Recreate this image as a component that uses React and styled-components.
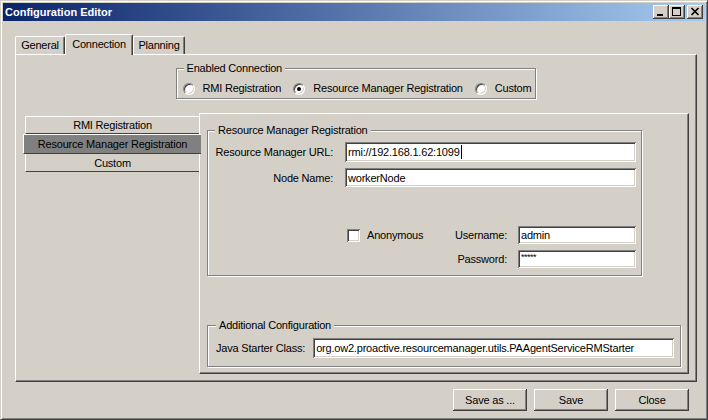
import React from 'react'
import styled, { createGlobalStyle } from 'styled-components'

const GlobalStyle = createGlobalStyle`
  html, body {
    margin: 0;
    padding: 0;
    background: #d4d0c8;
  }
  body {
    font-family: "Liberation Sans", Arial, sans-serif;
    font-size: 11px;
    letter-spacing: -0.2px;
    color: #000;
  }
`

const raised = `
  box-shadow: inset -1px -1px #404040, inset 1px 1px #fff, inset -2px -2px #808080;
`
const sunken = `
  box-shadow: inset 1px 1px #808080, inset -1px -1px #fff, inset 2px 2px #404040, inset -2px -2px #d4d0c8;
`

function App() {
  return (
    <>
      <GlobalStyle />
      <Window>
        <TitleBar>
          <Title>Configuration Editor</Title>
          <Caption>
            <CapButton>
              <svg width="16" height="14" viewBox="0 0 16 14">
                <rect x="4" y="9" width="6" height="2" fill="#000" />
              </svg>
            </CapButton>
            <CapButton>
              <svg width="16" height="14" viewBox="0 0 16 14">
                <rect x="3.5" y="2.5" width="8" height="8" fill="none" stroke="#000" />
                <rect x="3" y="2" width="9" height="2" fill="#000" />
              </svg>
            </CapButton>
            <CapButton $gap>
              <svg width="16" height="14" viewBox="0 0 16 14">
                <path d="M4.5 3l7 7M11.5 3l-7 7" stroke="#000" strokeWidth="1.7" />
              </svg>
            </CapButton>
          </Caption>
        </TitleBar>

        <Body>
          <TabStrip>
            <Tab $w={50}>General</Tab>
            <Tab $w={68} $active>Connection</Tab>
            <Tab $w={52}>Planning</Tab>
          </TabStrip>

          <TabPanel>
            <Group $pad="0 4px 1px 6px" $center>
              <Legend $ml={1}>Enabled Connection</Legend>
              <RadioRow>
                <Choice><Radio /> RMI Registration</Choice>
                <Choice><Radio $on /> Resource Manager Registration</Choice>
                <Choice><Radio /> Custom</Choice>
              </RadioRow>
            </Group>

            <MainRow>
              <SideTabs>
                <SideTab $first>RMI Registration</SideTab>
                <SideTab $active>Resource Manager Registration</SideTab>
                <SideTab>Custom</SideTab>
              </SideTabs>

              <InnerPanel>
                <Group $pad="0 5px 7px 7px" $w={435}>
                  <Legend>Resource Manager Registration</Legend>
                  <FormGrid>
                    <Label>Resource Manager URL:</Label>
                    <Field $h={20}>rmi://192.168.1.62:1099<Caret /></Field>
                    <Label>Node Name:</Label>
                    <Field $h={19}>workerNode</Field>
                  </FormGrid>
                  <Credentials>
                    <Check><Box /> Anonymous</Check>
                    <Label>Username:</Label>
                    <Field $h={18}>admin</Field>
                    <span />
                    <Label>Password:</Label>
                    <Field $h={18}><Stars>*****</Stars></Field>
                  </Credentials>
                </Group>

                <Group $pad="0 6px 8px 8px">
                  <Legend>Additional Configuration</Legend>
                  <StarterRow>
                    <Label>Java Starter Class:</Label>
                    <Field $h={20} $grow>org.ow2.proactive.resourcemanager.utils.PAAgentServiceRMStarter</Field>
                  </StarterRow>
                </Group>
              </InnerPanel>
            </MainRow>
          </TabPanel>

          <ButtonRow>
            <PushButton>Save as ...</PushButton>
            <PushButton>Save</PushButton>
            <PushButton>Close</PushButton>
          </ButtonRow>
        </Body>
      </Window>
    </>
  )
}

export default App

const Window = styled.div`
  width: 708px;
  height: 420px;
  box-sizing: border-box;
  border: 1px solid;
  border-color: #d4d0c8 #404040 #404040 #d4d0c8;
  box-shadow: inset 1px 1px #fff, inset -1px -1px #808080;
  padding: 2px;
  display: flex;
  flex-direction: column;
  background: #d4d0c8;
`

const TitleBar = styled.div`
  height: 18px;
  flex-shrink: 0;
  display: flex;
  align-items: center;
  justify-content: space-between;
  padding: 0 2px 0 2px;
  background: linear-gradient(to right, #0a246a, #a6caf0);
`

const Title = styled.div`
  color: #fff;
  font-weight: bold;
  font-size: 11px;
  letter-spacing: 0;
`

const Caption = styled.div`
  display: flex;
`

const CapButton = styled.div`
  width: 16px;
  height: 14px;
  margin-left: ${p => (p.$gap ? 2 : 0)}px;
  background: #d4d0c8;
  ${raised}
  svg {
    display: block;
  }
`

const Body = styled.div`
  flex: 1;
  display: flex;
  flex-direction: column;
  padding: 13px 8px 6px 12px;
  min-height: 0;
`

const TabStrip = styled.div`
  height: 20px;
  display: flex;
  align-items: flex-end;
  flex-shrink: 0;
`

const Tab = styled.div`
  box-sizing: border-box;
  width: ${p => p.$w}px;
  height: ${p => (p.$active ? 21 : 18)}px;
  margin-bottom: ${p => (p.$active ? -1 : 0)}px;
  padding-top: ${p => (p.$active ? 3 : 2)}px;
  text-align: center;
  background: #d4d0c8;
  border-top: 1px solid #fff;
  border-left: 1px solid #fff;
  border-right: 1px solid #404040;
  border-radius: 2px 2px 0 0;
  box-shadow: inset -1px 0 #808080;
  position: relative;
  z-index: ${p => (p.$active ? 2 : 0)};
  line-height: 13px;
`

const TabPanel = styled.div`
  flex: 1;
  display: flex;
  flex-direction: column;
  border-top: 1px solid #fff;
  border-left: 1px solid #fff;
  border-right: 1px solid #404040;
  border-bottom: 1px solid #404040;
  box-shadow: inset -1px -1px #808080;
  padding: 7px 7px 7px 7px;
  position: relative;
  z-index: 1;
`

const Group = styled.fieldset`
  margin: 0;
  min-width: 0;
  padding: ${p => p.$pad};
  border: 1px solid #808080;
  box-shadow: 1px 1px 0 #fff, inset 1px 1px 0 #fff;
  align-self: ${p => (p.$center ? 'center' : 'stretch')};
  width: ${p => (p.$w ? `${p.$w}px` : 'auto')};
  box-sizing: border-box;
`

const Legend = styled.legend`
  padding: 0 3px;
  margin-left: ${p => p.$ml || 0}px;
  line-height: 13px;
  background: #d4d0c8;
`

const RadioRow = styled.div`
  display: flex;
  gap: 12px;
  padding: 6px 0 1px;
  line-height: 15px;
`

const Choice = styled.label`
  display: flex;
  align-items: center;
  gap: 8px;
  white-space: nowrap;
`

const Radio = styled.span`
  box-sizing: border-box;
  width: 12px;
  height: 12px;
  border-radius: 50%;
  background: #fff;
  border: 1px solid;
  border-color: #808080 #fff #fff #808080;
  box-shadow: inset 1px 1px #404040, inset -1px -1px #d4d0c8;
  display: flex;
  align-items: center;
  justify-content: center;
  &::after {
    content: '';
    width: 4px;
    height: 4px;
    border-radius: 50%;
    background: ${p => (p.$on ? '#000' : 'transparent')};
  }
`

const MainRow = styled.div`
  flex: 1;
  display: flex;
  margin-top: 14px;
  min-height: 0;
`

const SideTabs = styled.div`
  width: 176px;
  flex-shrink: 0;
  margin-top: 3px;
  display: flex;
  flex-direction: column;
  position: relative;
  z-index: 2;
`

const SideTab = styled.div`
  box-sizing: border-box;
  height: ${p => (p.$active ? 20 : 18)}px;
  margin: ${p => (p.$active ? '0 -2px 0 0' : '0 0 0 2px')};
  background: ${p => (p.$active ? '#808080' : '#d4d0c8')};
  border-top: ${p => (p.$first || p.$active ? '1px solid #fff' : '0')};
  border-left: 1px solid #fff;
  border-bottom: 1px solid #404040;
  display: flex;
  align-items: center;
  justify-content: center;
  white-space: nowrap;
`

const InnerPanel = styled.div`
  flex: 1;
  display: flex;
  flex-direction: column;
  justify-content: space-between;
  border-top: 1px solid #fff;
  border-left: 1px solid #fff;
  border-right: 1px solid #404040;
  border-bottom: 1px solid #404040;
  box-shadow: inset -1px -1px #808080;
  padding: 10px 7px 6px 7px;
`

const FormGrid = styled.div`
  display: grid;
  grid-template-columns: 118px 1fr;
  column-gap: 12px;
  row-gap: 6px;
  align-items: center;
  margin-top: 5px;
`

const Label = styled.span`
  justify-self: end;
  white-space: nowrap;
`

const Field = styled.div`
  box-sizing: border-box;
  height: ${p => p.$h}px;
  flex: ${p => (p.$grow ? 1 : 'none')};
  background: #fff;
  ${sunken}
  padding: 0 3px;
  display: flex;
  align-items: center;
  white-space: nowrap;
  overflow: hidden;
`

const Caret = styled.span`
  width: 1px;
  height: 14px;
  background: #000;
  margin-left: 1px;
`

const Stars = styled.span`
  font-size: 9px;
  align-self: flex-start;
  margin-top: 2px;
  letter-spacing: -0.5px;
`

const Credentials = styled.div`
  display: grid;
  grid-template-columns: 1fr auto 118px;
  column-gap: 11px;
  row-gap: 6px;
  align-items: center;
  margin: 39px 0 0 130px;
`

const Check = styled.label`
  display: flex;
  align-items: center;
  gap: 7px;
  margin-left: 2px;
`

const Box = styled.span`
  box-sizing: border-box;
  width: 13px;
  height: 13px;
  background: #fff;
  ${sunken}
`

const StarterRow = styled.div`
  display: flex;
  align-items: center;
  gap: 8px;
  margin-top: 6px;
`

const ButtonRow = styled.div`
  display: flex;
  justify-content: flex-end;
  gap: 7px;
  margin-top: 7px;
  padding-right: 8px;
  flex-shrink: 0;
`

const PushButton = styled.button`
  width: 74px;
  height: 22px;
  border: 0;
  background: #d4d0c8;
  font-family: "Liberation Sans", Arial, sans-serif;
  font-size: 11px;
  letter-spacing: -0.2px;
  color: #000;
  padding: 0;
  ${raised}
`
